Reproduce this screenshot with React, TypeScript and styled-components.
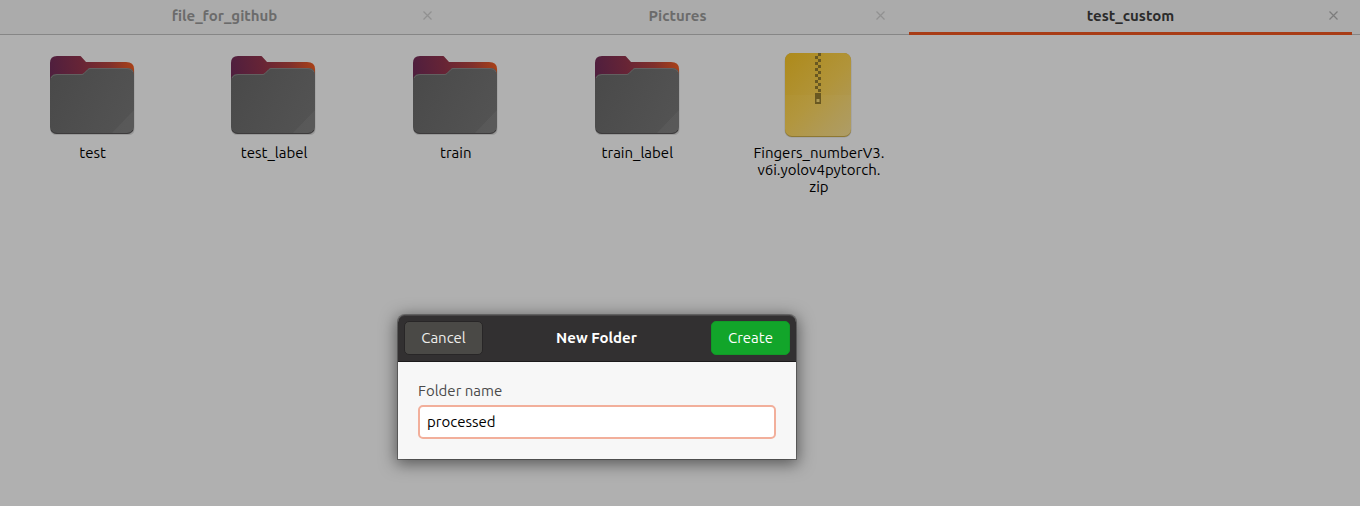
import React from 'react';
import styled, { createGlobalStyle } from 'styled-components';

const GlobalStyle = createGlobalStyle`
  * { box-sizing: border-box; }
  body {
    margin: 0;
    background: #b0b0b0;
    font-family: Ubuntu, 'Noto Sans', sans-serif;
    font-size: 15px;
    color: #000;
    overflow: hidden;
  }
`;

const Window = styled.div`
  position: relative;
  height: 506px;
  display: flex;
  flex-direction: column;
  background: #b0b0b0;
`;

const TabBar = styled.nav`
  display: flex;
  gap: 10px;
  height: 35px;
  padding-left: 3px;
  background: #ababab;
  box-shadow: inset 0 -1px #868686;
`;

const Tab = styled.div<{ $active?: boolean }>`
  display: grid;
  grid-template-columns: 38px 1fr 38px;
  align-items: center;
  width: 443px;
  height: 35px;
  padding-bottom: 4px;
  font-weight: 700;
  color: ${(p) => (p.$active ? '#2b2b2b' : '#6b6b6b')};
  box-shadow: ${(p) => (p.$active ? 'inset 0 -3px #a83c16' : 'none')};
`;

const Text = styled.span`
  display: block;
  white-space: nowrap;
`;

const TabTitle = styled(Text)`
  grid-column: 2;
  text-align: center;
`;

const CloseIcon = styled.svg<{ $active?: boolean }>`
  width: 9px;
  height: 9px;
  margin-left: 15px;
  stroke: ${(p) => (p.$active ? '#7c7c7c' : '#919191')};
  stroke-width: 1.2;
`;

const Files = styled.main`
  display: grid;
  grid-template-columns: repeat(5, 181.6px);
  padding: 15px 0 0 1px;
`;

const FileItem = styled.figure`
  display: flex;
  flex-direction: column;
  align-items: center;
  margin: 0;
`;

const Icon = styled.svg`
  width: 96px;
  height: 94px;
`;

const FileName = styled.figcaption`
  display: flex;
  flex-direction: column;
  align-items: center;
  padding-left: 1.5px;
  line-height: 17px;
`;

const Dialog = styled.section`
  position: absolute;
  left: 398px;
  top: 315px;
  width: 398px;
  height: 144px;
  border-radius: 7px 7px 0 0;
  background: #f7f7f7;
  box-shadow: 0 0 0 1px rgba(0, 0, 0, 0.3), 0 3px 16px 2px rgba(0, 0, 0, 0.5);
`;

const DialogHeader = styled.header`
  display: flex;
  align-items: center;
  justify-content: space-between;
  height: 47px;
  padding: 0 6px;
  border-radius: 7px 7px 0 0;
  border-bottom: 1px solid #1c1a1b;
  background: #323031;
  box-shadow: inset 0 1px #484647;
  color: #fff;
`;

const Button = styled.button<{ $primary?: boolean }>`
  display: flex;
  align-items: center;
  justify-content: center;
  width: 79px;
  height: 34px;
  padding: 0 0 2px;
  border: 1px solid ${(p) => (p.$primary ? '#119a27' : '#282627')};
  border-radius: 5px;
  background: ${(p) => (p.$primary ? '#12a52a' : '#4a4946')};
  color: ${(p) => (p.$primary ? '#fff' : '#eeeeec')};
  font: inherit;
`;

const DialogTitle = styled(Text)`
  padding: 0 1px 2px 0;
  font-weight: 700;
`;

const Form = styled.div`
  padding: 19px 20px 0;
`;

const FieldLabel = styled.label`
  display: block;
  height: 24px;
  line-height: 20px;
  color: #4a4a4a;
`;

const Field = styled.div`
  display: flex;
  align-items: center;
  height: 34px;
  padding: 0 7px 1px;
  border: 2px solid #f2af9b;
  border-radius: 5px;
  background: #fff;
`;

const tabs = [
  { title: 'file_for_github' },
  { title: 'Pictures' },
  { title: 'test_custom', active: true },
];

const folders = ['test', 'test_label', 'train', 'train_label'];

const zipTeeth = Array.from({ length: 13 }, (_, i) => i);

function FolderIcon() {
  return (
    <Icon viewBox="0 0 96 94">
      <defs>
        <linearGradient id="folderBack" x1="0" y1="0.1" x2="1" y2="0">
          <stop offset="0" stopColor="#501f3e" />
          <stop offset="0.35" stopColor="#662436" />
          <stop offset="0.7" stopColor="#80302b" />
          <stop offset="1" stopColor="#ab4216" />
        </linearGradient>
        <linearGradient id="folderFront" x1="0" y1="0.3" x2="1" y2="0.7">
          <stop offset="0" stopColor="#4a4a4a" />
          <stop offset="1" stopColor="#535353" />
        </linearGradient>
      </defs>
      <path d="M6 78V14Q6 7 13 6H36L42 12H83Q90 13 90 20V78Q90 84 84 84H12Q6 84 6 78Z" transform="translate(0.500 1)" fill="#000" opacity="0.12" />
      <path d="M6 60V13Q6 6 13 6H36Q37 6 37.500 7L42 12H82Q90 12 90 19V60Z" fill="url(#folderBack)" />
      <path d="M6 31Q6 24 13 24H38Q39 24 40 23L44 19Q45 18 46 18H83Q90 18 90 25V77Q90 84 83 84H13Q6 84 6 77Z" fill="url(#folderFront)" />
      <path d="M90 60V77Q90 84 83 84H67Z" fill="#fff" opacity="0.04" />
      <path d="M7 28Q8 24.500 13 24.500H38Q39 24.500 40 23.500L44 19.500Q45 18.500 46 18.500H83Q88 18.500 89 22" fill="none" stroke="#626060" strokeWidth="1" />
      <path d="M7 80Q9 83.500 13 83.500H83Q87 83.500 89 80" fill="none" stroke="#3d3b3c" strokeWidth="1" />
    </Icon>
  );
}

function ZipIcon() {
  return (
    <Icon viewBox="0 0 96 94">
      <defs>
        <linearGradient id="zipBody" x1="0.100" y1="0" x2="0.900" y2="1">
          <stop offset="0" stopColor="#ae8b1d" />
          <stop offset="0.5" stopColor="#b1943a" />
          <stop offset="1" stopColor="#ad9a61" />
        </linearGradient>
      </defs>
      <rect x="14.500" y="4.500" width="67" height="83" rx="7" fill="#000" opacity="0.12" />
      <rect x="15" y="3" width="66" height="84" rx="7" fill="#8e7832" />
      <rect x="15" y="3" width="66" height="83" rx="7" fill="url(#zipBody)" />
      <path d="M15 45H81V79Q81 86 74 86H22Q15 86 15 79Z" fill="#fff" opacity="0.025" />
      <g fill="#695821" shapeRendering="crispEdges">
        {zipTeeth.map((i) => (
          <rect key={i} x={i % 2 ? 45 : 48} y={3 + i * 3} width="3" height="3" />
        ))}
        <rect x="45" y="43" width="6" height="11" />
      </g>
      <rect x="46.500" y="49" width="3" height="3" fill="#ae9a55" />
    </Icon>
  );
}

export default function App() {
  return (
    <Window>
      <GlobalStyle />
      <TabBar>
        {tabs.map((tab) => (
          <Tab key={tab.title} $active={tab.active}>
            <TabTitle>{tab.title}</TabTitle>
            <CloseIcon $active={tab.active} viewBox="0 0 9 9">
              <path d="M.5 .5L8.500 8.500M8.500 .5L.5 8.500" />
            </CloseIcon>
          </Tab>
        ))}
      </TabBar>
      <Files>
        {folders.map((name) => (
          <FileItem key={name}>
            <FolderIcon />
            <FileName>
              <Text>{name}</Text>
            </FileName>
          </FileItem>
        ))}
        <FileItem>
          <ZipIcon />
          <FileName>
            <Text>Fingers_numberV3.</Text>
            <Text>v6i.yolov4pytorch.</Text>
            <Text>zip</Text>
          </FileName>
        </FileItem>
      </Files>
      <Dialog>
        <DialogHeader>
          <Button><Text>Cancel</Text></Button>
          <DialogTitle>New Folder</DialogTitle>
          <Button $primary><Text>Create</Text></Button>
        </DialogHeader>
        <Form>
          <FieldLabel><Text>Folder name</Text></FieldLabel>
          <Field><Text>processed</Text></Field>
        </Form>
      </Dialog>
    </Window>
  );
}
